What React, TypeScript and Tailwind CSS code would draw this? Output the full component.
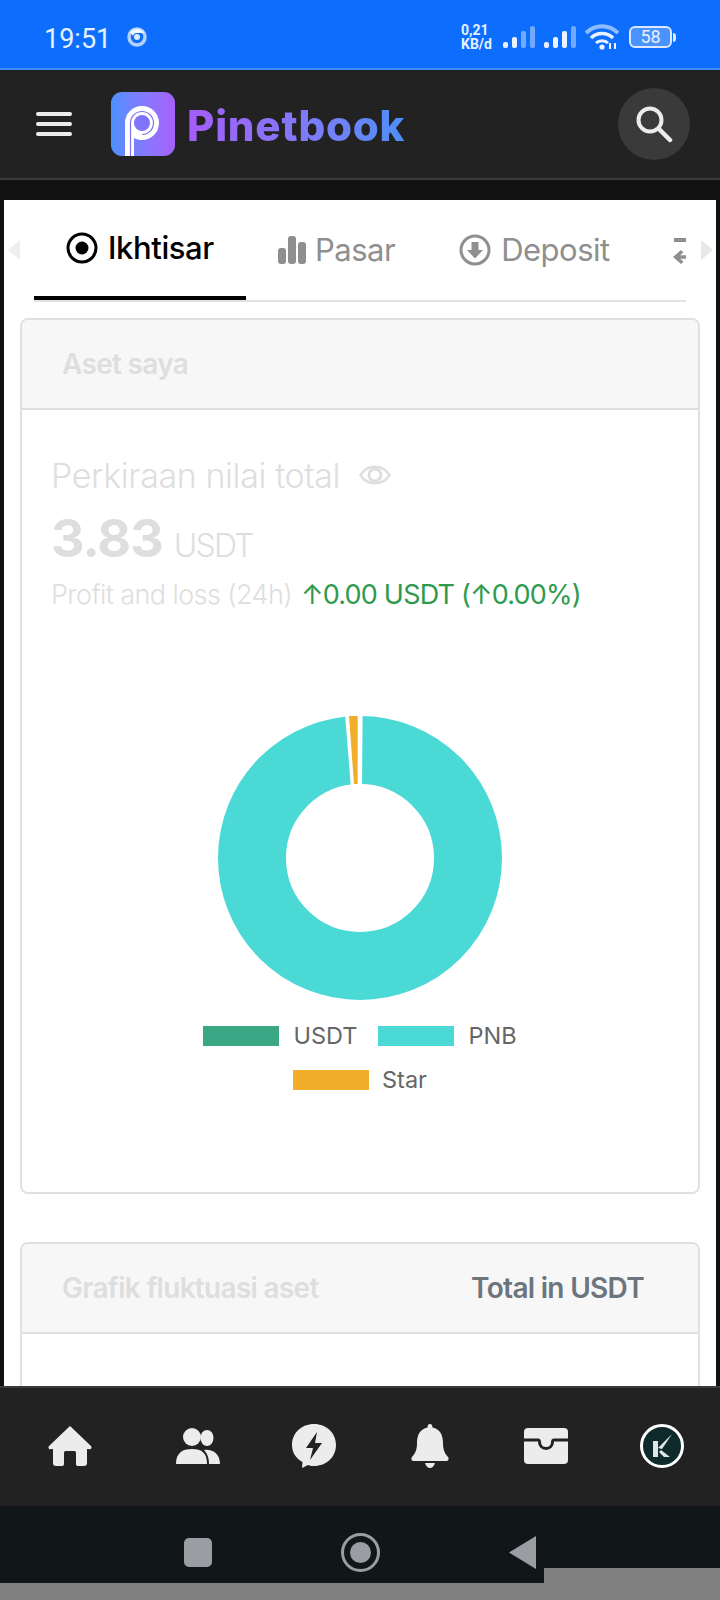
import React from "react";

function Signal({ faded }: { faded: number }) {
  const bars = [
    { x: 0, h: 6 },
    { x: 9, h: 11 },
    { x: 18, h: 17 },
    { x: 27, h: 22 },
  ];
  return (
    <svg width="32" height="24" viewBox="0 0 32 24">
      {bars.map((b, i) => (
        <rect key={i} x={b.x} y={23 - b.h} width="5" height={b.h} rx="2" fill="#eaf2ff" opacity={i >= 4 - faded ? 0.45 : 1} />
      ))}
    </svg>
  );
}

function StatusBar() {
  return (
    <div className="h-[70px] shrink-0 bg-[#0d6efd] border-b-2 border-[#3d8bfd] flex items-center pt-[6px] pl-[44px] font-[Roboto,sans-serif] text-[#e6f0ff]">
      <span className="text-[27px] leading-none w-[83px] pt-[4px]">19:51</span>
      <svg width="20" height="20" viewBox="0 0 20 20" fill="none">
        <circle cx="10" cy="10" r="8" stroke="#dfeaff" strokeWidth="3.5" opacity="0.8" />
        <path d="M10 2a8 8 0 0 1 7 4H10a4 4 0 0 0-4 3L3 5a8 8 0 0 1 7-3z" fill="#f4f8ff" />
        <circle cx="10" cy="10" r="3" fill="#dfeaff" />
      </svg>
      <div className="ml-[314px] flex flex-col font-bold text-[14px] leading-[14px] w-[42px]">
        <span>0,21</span>
        <span>KB/d</span>
      </div>
      <Signal faded={2} />
      <div className="w-[9px]" />
      <Signal faded={1} />
      <svg className="ml-[9px]" width="34" height="26" viewBox="0 0 34 26" fill="none">
        <path d="M1 9C10 0 24 0 33 9" stroke="#8fbcff" strokeWidth="4" />
        <path d="M6 14C12 8 22 8 28 14" stroke="#eaf2ff" strokeWidth="3.5" />
        <path d="M11 19C14 16 20 16 23 19" stroke="#eaf2ff" strokeWidth="3" />
        <circle cx="17" cy="23" r="2.6" fill="#eaf2ff" />
        <path d="M25 19v6M30 19v6" stroke="#eaf2ff" strokeWidth="2" />
      </svg>
      <div className="ml-[10px] w-[43px] h-[22px] rounded-[6px] border-2 border-[#dbe8ff] bg-[#4a92fd] flex items-center justify-center text-[18px] leading-none">
        58
      </div>
      <div className="ml-[1px] w-[3px] h-[9px] rounded-r-sm bg-[#dbe8ff]" />
    </div>
  );
}

function Header() {
  return (
    <div className="h-[110px] shrink-0 bg-[#222222] border-b-2 border-[#3a3a3a] flex items-center pl-[36px] pr-[30px]">
      <div className="w-[36px] flex flex-col gap-[6px]">
        <div className="h-[4px] rounded-full bg-[#ececec]" />
        <div className="h-[4px] rounded-full bg-[#ececec]" />
        <div className="h-[4px] rounded-full bg-[#ececec]" />
      </div>
      <div className="ml-[39px] w-[64px] h-[64px] rounded-[11px] bg-linear-to-r from-[#4a90ff] to-[#a660fb] overflow-hidden">
        <svg width="64" height="64" viewBox="0 0 64 64" fill="none">
          <circle cx="31" cy="31" r="12.5" stroke="#fff" strokeWidth="9" />
          <path d="M18.5 64V31" stroke="#fff" strokeWidth="9" />
          <path d="M19.5 64V31a11.5 11.5 0 1 1 11.5 11.5" stroke="#7d70f5" strokeWidth="1.2" />
          <circle cx="31" cy="31" r="7.5" fill="#7f74f8" />
        </svg>
      </div>
      <span className="ml-[12px] mt-[3px] text-[42px] leading-none font-extrabold tracking-[0.8px] bg-linear-to-r from-[#a45cf9] to-[#4a8ff7] bg-clip-text text-transparent">
        Pinetbook
      </span>
      <div className="ml-auto w-[72px] h-[72px] rounded-full bg-[#3a3a3a] flex items-center justify-center">
        <svg width="38" height="38" viewBox="0 0 38 38" fill="none">
          <circle cx="15" cy="15" r="11.5" stroke="#ececec" strokeWidth="4" />
          <path d="M24 24L35 35" stroke="#ececec" strokeWidth="4.5" strokeLinecap="round" />
        </svg>
      </div>
    </div>
  );
}

function Tabs() {
  return (
    <div className="relative h-[102px] shrink-0">
      <div className="absolute left-[4px] top-[40px] w-0 h-0 border-y-[10px] border-y-transparent border-r-[12px] border-r-[#eeeeee]" />
      <div className="absolute left-[697px] top-[40px] w-0 h-0 border-y-[10px] border-y-transparent border-l-[12px] border-l-[#e8e8e8]" />
      <div className="mx-[30px] h-full border-b-2 border-[#dee2e6] flex overflow-hidden">
        <div className="h-[100px] shrink-0 w-[212px] pl-[32px] border-b-4 border-black flex items-center gap-[10px] text-black font-medium text-[31px] tracking-[-0.4px]">
          <svg className="shrink-0" width="32" height="32" viewBox="0 0 32 32" fill="none">
            <circle cx="16" cy="16" r="14" stroke="#000" strokeWidth="3" />
            <circle cx="16" cy="16" r="6.5" fill="#000" />
          </svg>
          Ikhtisar
        </div>
        <div className="h-[96px] shrink-0 px-[32px] pt-[4px] flex items-center gap-[9px] text-[#8f8f8f] text-[31px] tracking-[-0.5px]">
          <svg className="shrink-0" width="28" height="28" viewBox="0 0 28 28" fill="#8f8f8f">
            <rect x="0" y="12" width="8" height="16" rx="3" />
            <rect x="10" y="0" width="8" height="28" rx="3" />
            <rect x="20" y="6" width="8" height="22" rx="3" />
          </svg>
          Pasar
        </div>
        <div className="h-[96px] shrink-0 px-[32px] pt-[4px] flex items-center gap-[10px] text-[#8f8f8f] text-[31px] tracking-[-0.5px]">
          <svg className="shrink-0" width="32" height="32" viewBox="0 0 32 32" fill="none">
            <circle cx="16" cy="16" r="14" stroke="#8f8f8f" strokeWidth="3" />
            <path d="M12.5 8h7v8h4.5L16 24.5 8 16h4.5z" fill="#8f8f8f" />
          </svg>
          Deposit
        </div>
        <div className="h-[96px] shrink-0 pl-[30px] pt-[8px] flex items-center">
          <svg className="shrink-0" width="26" height="28" viewBox="0 0 26 28" fill="#8f8f8f">
            <rect x="2" y="0" width="24" height="4" />
            <path d="M9 12L1 19l8 7 2.5-2.5L8 20.8h18v-3.600H8l3.5-2.700z" />
          </svg>
        </div>
      </div>
    </div>
  );
}

function Donut() {
  return (
    <svg className="block mx-auto" width="284" height="284" viewBox="0 0 284 284">
      <circle cx="142" cy="142" r="108" fill="none" stroke="#4bd9d6" strokeWidth="68" />
      <polygon points="127,-2 144.6,-2 144,70 132.8,70" fill="#ffffff" />
      <polygon points="131,0 139.7,0 139.7,68 136,68" fill="#f0ae2a" />
    </svg>
  );
}

function LegendItem({ color, label, gap }: { color: string; label: string; gap: string }) {
  return (
    <div className={`flex items-center h-[20px] ${gap}`}>
      <div className="w-[76px] h-[20px]" style={{ backgroundColor: color }} />
      <span className="text-[23.5px] leading-none text-[#666666]">{label}</span>
    </div>
  );
}

function CardHeader({ title, right }: { title: string; right?: string }) {
  return (
    <div className="h-[90px] shrink-0 bg-[#f7f7f7] border-b-2 border-[#e0e0e0] flex items-center justify-between pl-[40px] pr-[54px] text-[28px] font-semibold tracking-[-0.7px]">
      <span className="text-[#dedede]">{title}</span>
      {right && <span className="text-[#6c757d]">{right}</span>}
    </div>
  );
}

function AssetCard() {
  return (
    <div className="mx-[16px] mt-[16px] h-[876px] shrink-0 border-2 border-[#e0e0e0] rounded-[8px] overflow-hidden flex flex-col">
      <CardHeader title="Aset saya" />
      <div className="pl-[29px] pt-[47px]">
        <div className="flex items-center h-[36px] text-[34px] font-light tracking-[-0.4px] text-[#dedede]">
          Perkiraan nilai total
          <svg className="ml-[19px]" width="32" height="28" viewBox="0 0 32 28" fill="none">
            <path d="M1.5 14C8 3 24 3 30.5 14 24 25 8 25 1.5 14z" stroke="#dedede" strokeWidth="2.5" />
            <circle cx="16" cy="14" r="6" stroke="#dedede" strokeWidth="3" />
          </svg>
        </div>
        <div className="mt-[20px] flex items-baseline h-[52px] text-[#dedede]">
          <span className="text-[52px] leading-[52px] font-bold tracking-[-1px]">3.83</span>
          <span className="ml-[11px] text-[32px] font-light tracking-[-1.8px]">USDT</span>
        </div>
        <div className="mt-[12px] flex items-center h-[36px] text-[27px] font-light tracking-[-0.6px]">
          <span className="text-[#dedede]">Profit and loss (24h)</span>
          <span className="ml-[9px] text-[#2e9a4e] font-normal tracking-[-0.8px]">↑0.00 USDT (↑0.00%)</span>
        </div>
      </div>
      <div className="mt-[103px]">
        <Donut />
      </div>
      <div className="mx-auto mt-[26px] w-[340px] flex flex-wrap justify-center gap-y-[24px]">
        <LegendItem color="#3aa885" label="USDT" gap="gap-[14px] mr-[21px]" />
        <LegendItem color="#4bd9d6" label="PNB" gap="gap-[14px]" />
        <LegendItem color="#f0ae2a" label="Star" gap="gap-[13px]" />
      </div>
    </div>
  );
}

function BottomNav() {
  return (
    <div className="h-[120px] shrink-0 bg-[#222222] border-t-2 border-[#3a3a3a] flex items-center pl-[48px] pb-[3px] text-[#ececec]">
      <svg width="44" height="40" viewBox="0 0 44 40" fill="#ececec">
        <path d="M22 0L43 20c1.5 2-.5 4-2.5 3H39v14c0 2-1 3-3 3h-6c-1.5 0-2-1-2-2V27c0-1.5-1-2-2-2h-8c-1 0-2 .5-2 2v11c0 1-.5 2-2 2H8c-2 0-3-1-3-3V23H3.5C1.5 24-.5 22 1 20z" />
      </svg>
      <svg className="ml-[84px]" width="44" height="36" viewBox="0 0 44 36" fill="#ececec">
        <ellipse cx="16" cy="9" rx="9" ry="9" />
        <ellipse cx="31" cy="10" rx="6.5" ry="8" />
        <path d="M0 36c0-11 6-15 16-15s15 4 15 15z" />
        <path d="M33 36c0-6-1.5-10-5-14 9-1 16 4 16 14z" />
      </svg>
      <svg className="ml-[72px]" width="44" height="44" viewBox="0 0 44 44">
        <path d="M22 0c12.5 0 22 9 22 21s-9.5 21-22 21c-3 0-5-.5-6-1l-6 3 .5-6C3.5 34 0 28 0 21 0 9 9.5 0 22 0z" fill="#ececec" />
        <path d="M25 8L14 24h7l-3 12 12-17h-7z" fill="#222222" />
      </svg>
      <svg className="ml-[75px]" width="38" height="44" viewBox="0 0 38 44" fill="#ececec">
        <path d="M19 0c1.5 0 2.5 1 2.5 3.5C29 5 32 11 32 19c0 7 2 11 5 14 1.5 2 0 4-2 4H3c-2 0-3.5-2-2-4 3-3 5-7 5-14 0-8 3-14 10.5-15.5C16.5 1 17.5 0 19 0z" />
        <path d="M14 39h10c-1 3.5-3 5-5 5s-4-1.5-5-5z" />
      </svg>
      <svg className="ml-[75px]" width="44" height="36" viewBox="0 0 44 36">
        <rect width="44" height="36" rx="4" fill="#ececec" />
        <path d="M0 12h14c1 0 1.5 1 1.5 2 0 4 3 6.5 6.5 6.5s6.5-2.5 6.5-6.5c0-1 .5-2 1.5-2h14" fill="none" stroke="#222222" strokeWidth="3" />
      </svg>
      <div className="ml-[72px] w-[44px] h-[44px] rounded-full border-[3px] border-white bg-[#0e2a2b] flex items-center justify-center">
        <svg width="24" height="26" viewBox="0 0 24 26" fill="#e0e6e6">
          <path d="M3 8h5v16H3z" />
          <path d="M8 15L22 1 12 16z" />
          <path d="M11 17l9 7h-6l-5-5z" />
        </svg>
      </div>
    </div>
  );
}

function AndroidNav() {
  return (
    <div className="h-[77px] shrink-0 bg-[#111719] flex items-start pt-[30px] pl-[184px]">
      <div className="w-[28px] h-[29px] mt-[2px] rounded-[5px] bg-[#9a9ea2]" />
      <div className="ml-[129px] w-[39px] h-[39px] -mt-[3px] rounded-full border-[3px] border-[#9a9ea2] flex items-center justify-center">
        <div className="w-[21px] h-[21px] rounded-full bg-[#9a9ea2]" />
      </div>
      <svg className="ml-[129px]" width="27" height="33" viewBox="0 0 27 33" fill="#9a9ea2">
        <path d="M27 0v33L0 16.5z" />
      </svg>
    </div>
  );
}

export default function App() {
  return (
    <div className="relative w-[720px] h-[1600px] overflow-hidden flex flex-col bg-[#808080] font-[Inter,sans-serif]">
      <StatusBar />
      <Header />
      <main className="flex-1 min-h-0 bg-[#111111] pt-[20px] px-[4px]">
        <div className="h-full bg-white overflow-hidden flex flex-col">
          <Tabs />
          <AssetCard />
          <div className="mx-[16px] mt-[48px] h-[300px] shrink-0 border-2 border-[#e0e0e0] rounded-[8px] overflow-hidden">
            <CardHeader title="Grafik fluktuasi aset" right="Total in USDT" />
          </div>
        </div>
      </main>
      <BottomNav />
      <AndroidNav />
      <div className="h-[17px] shrink-0 bg-[#808080]" />
      <div className="absolute left-[544px] top-[1568px] w-[176px] h-[32px] bg-[#808080]" />
    </div>
  );
}
